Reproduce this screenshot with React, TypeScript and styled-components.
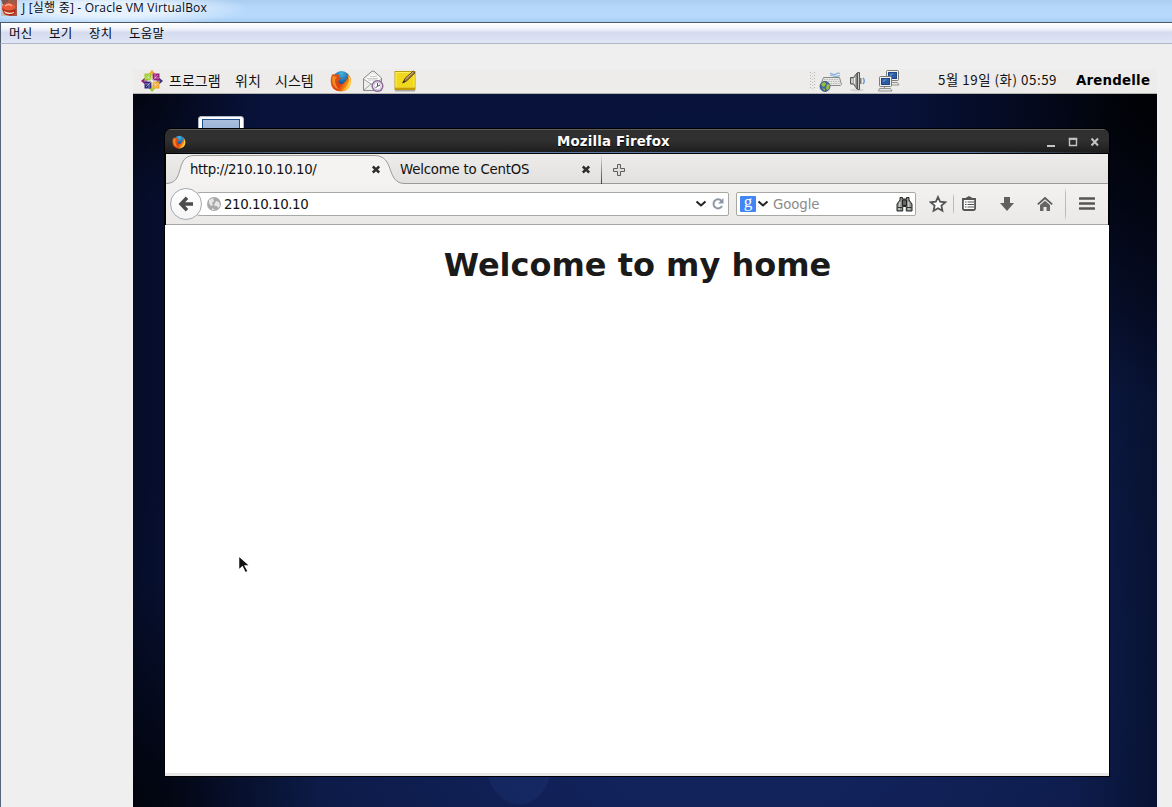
import React from 'react';
import styled, { createGlobalStyle } from 'styled-components';

const Global = createGlobalStyle`
  * { box-sizing: border-box; }
  html, body { margin: 0; padding: 0; overflow: hidden; background: #efefef; }
  svg { display: block; flex: none; }
`;

const Host = styled.div`
  width: 1172px;
  height: 807px;
  display: flex;
  flex-direction: column;
  overflow: hidden;
  background: #efefef;
  font-family: "Noto Sans CJK KR", sans-serif;
`;

const HostTitle = styled.header`
  height: 22px;
  flex: none;
  display: flex;
  align-items: flex-start;
  gap: 5px;
  padding-left: 1px;
  background: radial-gradient(ellipse 140px 18px at 110px 9px, rgba(235, 245, 255, 0.9) 40%, rgba(235, 245, 255, 0) 100%),
    linear-gradient(#abcdf0 0, #b5d7fa 30%, #b6d9fc 75%, #a9cdf0 100%);
`;

const Label = styled.span<{ $w: number; $size?: number; $ls?: number }>`
  width: ${(p) => p.$w}px;
  flex: none;
  white-space: pre;
  font-size: ${(p) => p.$size ?? 12}px;
  letter-spacing: ${(p) => p.$ls ?? 0}px;
`;

const PanelLabel = styled(Label)`
  line-height: 20px;
  padding-bottom: 2px;
`;

const HostCaption = styled(Label)`
  font-family: "Open Sans", "Noto Sans CJK KR", sans-serif;
  line-height: 16px;
  color: #0c0c14;
`;

const HostMenu = styled.nav`
  height: 22px;
  flex: none;
  display: flex;
  align-items: center;
  padding-left: 8px;
  border-top: 1px solid #4c5a6c;
  border-bottom: 1px solid #aeb6cc;
  border-left: 1px solid #4c5a6c;
  line-height: 18px;
  color: #08080c;
  background: linear-gradient(#ffffff 0, #f4f6fb 25%, #e4e8f5 40%, #d6dcef 45%, #dbe1f2 80%, #e2e7f6 100%);
`;

const HostBody = styled.main`
  flex: 1;
  min-height: 0;
  border-left: 1px solid #56657b;
  padding: 25px 15px 0 132px;
`;

const Guest = styled.div`
  height: 738px;
  display: flex;
  flex-direction: column;
`;

const Panel = styled.div`
  height: 25px;
  flex: none;
  display: flex;
  align-items: center;
  padding-left: 8px;
  background: #edecea;
  border-bottom: 1px solid #b3b5ae;
  color: #111;
`;

const Slot = styled.div<{ $w: number }>`
  width: ${(p) => p.$w}px;
  flex: none;
  display: flex;
  align-items: center;
`;

const UserName = styled.span`
  font: bold 13.33px/18px "DejaVu Sans", sans-serif;
  letter-spacing: 0.22px;
  color: #000;
  white-space: nowrap;
`;

const Desktop = styled.div`
  position: relative;
  flex: 1;
  overflow: hidden;
  background:
    radial-gradient(ellipse 33px 42px at 386px 669px, rgba(45, 75, 155, 0.16) 97%, transparent 100%),
    radial-gradient(ellipse 190px 230px at 0 100%, rgba(1, 3, 9, 0.9), transparent),
    radial-gradient(ellipse 260px 300px at 100% 0, #010206 8%, transparent),
    radial-gradient(ellipse 130px 110px at 0 0, rgba(2, 5, 15, 0.9), transparent),
    linear-gradient(90deg, rgba(2, 6, 18, 0.45) 0, transparent 90px, transparent 940px, rgba(2, 6, 18, 0.4) 1024px),
    radial-gradient(ellipse 620px 570px at 600px 580px, #12235c 25%, #0b1944 80%, #08123a 100%);
`;

const FolderIcon = styled.div`
  position: absolute;
  left: 65px;
  top: 22px;
  width: 46px;
  height: 40px;
  padding: 2px;
  border-radius: 3px;
  border: 1px solid #aeb4c0;
  background: #fff;
  &::before {
    content: '';
    display: block;
    height: 30px;
    margin: 0 1px;
    border: 1px solid #1f4c8f;
    background: linear-gradient(#a9bfdd, #7c9cc8);
  }
`;

const Window = styled.section`
  position: absolute;
  left: 31px;
  top: 34px;
  width: 946px;
  height: 649px;
  display: flex;
  flex-direction: column;
  border: 1px solid #000;
  border-radius: 7px 7px 0 0;
  overflow: hidden;
  background: #000;
`;

const TitleBar = styled.header`
  height: 25px;
  flex: none;
  display: grid;
  grid-template-columns: 50px 1fr 100px;
  align-items: center;
  border-top: 1px solid #5c5c58;
  border-bottom: 1px solid #000;
  background: linear-gradient(90deg, transparent, #5b7ba4 15%, #5b7ba4 85%, transparent) 0 100% / 100% 1px no-repeat,
    linear-gradient(#303030 0, #303030 45%, #1c1c1c 100%);
`;

const WindowName = styled.h1`
  margin: 0;
  padding-left: 3px;
  text-align: center;
  color: #fff;
  font: bold 13.33px/18px "DejaVu Sans", sans-serif;
  letter-spacing: 0.16px;
  text-shadow: 0 1px 1px #000;
`;

const WindowIcon = styled.div`
  padding-left: 7px;
`;

const WindowButtons = styled.div`
  display: flex;
  justify-content: flex-end;
  padding-right: 9px;
`;

const TabStrip = styled.div`
  height: 30px;
  flex: none;
  position: relative;
  display: flex;
  margin: 0 1px;
  font: 13.33px/29px "DejaVu Sans", sans-serif;
  color: #111;
  background: linear-gradient(#eeecea, #e2e1df);
  border-bottom: 1px solid #9b9b98;
`;

const TabShape = styled.svg`
  position: absolute;
  left: 0;
  top: 0;
`;

const Tab = styled.div<{ $w: number; $pad: number; $ls: number }>`
  position: relative;
  width: ${(p) => p.$w}px;
  flex: none;
  display: flex;
  align-items: center;
  justify-content: space-between;
  padding-left: ${(p) => p.$pad}px;
  padding-right: 10px;
  height: 30px;
  letter-spacing: ${(p) => p.$ls}px;
`;

const TabDivider = styled.div`
  width: 1px;
  height: 30px;
  background: linear-gradient(transparent, #3e3d38);
`;

const NewTab = styled.button`
  border: 0;
  padding: 3px 0 0 11px;
  background: none;
`;

const NavBar = styled.div`
  height: 41px;
  flex: none;
  display: flex;
  align-items: center;
  margin: 0 1px;
  padding-left: 4px;
  background: linear-gradient(#f3f2f1, #eae9e7);
  border-bottom: 1px solid #a6a6a2;
  font: 13.33px/22px "DejaVu Sans", sans-serif;
`;

const BackButton = styled.button`
  position: relative;
  z-index: 1;
  width: 32px;
  height: 32px;
  flex: none;
  display: grid;
  place-items: center;
  padding: 0;
  border: 1px solid #a2aab5;
  border-radius: 50%;
  background: linear-gradient(#fff, #f5f5f5);
`;

const Field = styled.div<{ $w: number }>`
  width: ${(p) => p.$w}px;
  height: 24px;
  flex: none;
  display: flex;
  align-items: center;
  border: 1px solid #a8a8a5;
  border-radius: 2px;
  background: #fff;
`;

const AddressField = styled(Field)`
  margin-left: -5px;
  padding-left: 9px;
`;

const SearchField = styled(Field)`
  margin-left: 7px;
  padding-left: 3px;
`;

const Address = styled.span`
  flex: 1;
  padding: 2px 0 0 3px;
  letter-spacing: -0.4px;
  color: #111;
`;

const Placeholder = styled.span`
  flex: 1;
  padding: 2px 0 0 3px;
  letter-spacing: -0.1px;
  color: #8b8b8b;
`;

const EngineBadge = styled.span`
  width: 16px;
  height: 16px;
  display: grid;
  place-items: center;
  border-radius: 1px;
  background: #4285f4;
  color: #fff;
  font: 17px/12px "Liberation Serif", serif;
  padding-bottom: 4px;
`;

const ToolDivider = styled.div<{ $h: number }>`
  width: 1px;
  height: ${(p) => p.$h}px;
  background: linear-gradient(transparent, #b4bac0 20%, #b4bac0 80%, transparent);
`;

const PageView = styled.article`
  flex: 1;
  background: #fff;
  border-bottom: 3px solid #e8e8e7;
`;

const Heading = styled.h1`
  margin: 0;
  padding: 21px 0 0 1px;
  text-align: center;
  color: #1a1a1a;
  font: bold 32px/38px "DejaVu Sans", sans-serif;
`;

const Pointer = styled.svg`
  position: absolute;
  left: 104px;
  top: 460px;
`;

const Firefox = ({ size }: { size: number }) => (
  <svg width={size} height={size} viewBox="0 0 22 22">
    <defs>
      <radialGradient id="ffGlobe" cx=".5" cy=".15" r=".8">
        <stop offset="0" stopColor="#41b5df" /><stop offset=".55" stopColor="#1d69ac" /><stop offset="1" stopColor="#102d68" />
      </radialGradient>
      <linearGradient id="ffFox" x1="0" y1=".2" x2="1" y2=".7">
        <stop offset="0" stopColor="#e25b15" /><stop offset=".55" stopColor="#dd3e0e" /><stop offset=".85" stopColor="#f9a11b" /><stop offset="1" stopColor="#ffe24e" />
      </linearGradient>
    </defs>
    <circle cx="11.5" cy="10" r="9" fill="url(#ffGlobe)" />
    <path d="M2 4.5 Q4.5 3.8 5.5 5 Q8 3.5 10 5 Q8.5 6 8.8 7.5 L11 8 Q10.5 9.5 8.6 10.4 Q8 13.4 11 14 Q14 14.2 14.5 12 Q17.3 11.2 16.2 7.8 Q18 9 18 11 Q18.8 6.5 16.5 3 Q21 6 21.2 11.5 Q20.5 21 11 21.5 Q1 21 .7 11.5 Q.5 7.5 2 4.5Z" fill="url(#ffFox)" />
    <path d="M18.5 5 Q22.5 11 18.5 16.5 Q16 19.5 12.5 20 Q18.5 17 18.9 11.5Z" fill="#ffd84a" />
    <path d="M2.6 6 Q1.6 11 3 14 Q5 18.5 9 19.5 Q4.7 15 5 9.5 L7 7Z" fill="#f28b20" />
  </svg>
);

const CentOS = () => (
  <svg width="22" height="22" viewBox="0 0 22 22">
    <path d="M11 0l3 3.5L11 7 8 3.500z" fill="#f0a62a" /><path d="M22 11l-3.500 3L15 11l3.500-3z" fill="#3c307f" />
    <path d="M11 22l3-3.500L11 15l-3 3.500z" fill="#9ccd2a" /><path d="M0 11l3.500-3L7 11l-3.500 3z" fill="#96207c" />
    <rect x="3.500" y="3.500" width="7" height="7" fill="#9ccd2a" /><rect x="11.500" y="3.500" width="7" height="7" fill="#96207c" />
    <rect x="3.500" y="11.500" width="7" height="7" fill="#302a7f" /><rect x="11.500" y="11.500" width="7" height="7" fill="#f0a62a" />
    <path d="M11 3v16M3 11h16M5 5l12 12M17 5L5 17M8 4v4H4M14 4v4h4M8 18v-4H4M14 18v-4h4" fill="none" stroke="#fff" strokeWidth=".7" strokeOpacity=".65" />
  </svg>
);

const Mail = () => (
  <svg width="22" height="22" viewBox="0 0 22 22">
    <path d="M1.500 8.500L10 1.200h2L19.500 8v12.500h-18z" fill="#eeeeec" stroke="#888a85" />
    <path d="M4 8l7-4 6.500 3v4L11 14 4 11z" fill="#fff" /><path d="M5 8.500h11M6 10h9M8 6.500h7" stroke="#c8cac5" />
    <path d="M2 9.500l7 4.500h4L19 9.500M2 20l7-6" fill="none" stroke="#a0a29d" />
    <circle cx="15.500" cy="16" r="5.300" fill="#fff" stroke="#8b6d9b" strokeWidth="1.500" />
    <circle cx="15.500" cy="16" r="3.700" fill="none" stroke="#c9bcd0" /><path d="M15.500 13v3.500l-2 1M16 16l2-1" fill="none" stroke="#555" />
  </svg>
);

const Note = () => (
  <svg width="22" height="22" viewBox="0 0 22 22">
    <path d="M1 20.500h20" stroke="#aaa" strokeWidth="2" />
    <rect x="1" y="1.500" width="20" height="18" fill="#f0d91c" stroke="#baa00a" /><rect x="2" y="2.500" width="18" height="15" fill="none" stroke="#fff15c" />
    <path d="M1 18.500h20" stroke="#c69a00" strokeWidth="2" />
    <path d="M9.500 12l1.500-3.500L19.200 1 21 2.800 12.500 11z" fill="#9d7547" stroke="#49351f" strokeWidth=".9" /><path d="M11.500 9.200l8-7.500" stroke="#e1bd89" /><path d="M8 13.500l1.500-3 2 1.500z" fill="#222" />
  </svg>
);

const Keyboard = () => (
  <svg width="24" height="22" viewBox="0 0 24 22">
    <path d="M11 3q4 2.500 6 1t4-.5M11 5q6 2.500 10 .5" fill="none" stroke="#8ab0dc" strokeWidth="1.300" />
    <path d="M4.500 7.500h16l2 7-1 1h-20l1-3z" fill="#e6e7e4" stroke="#888a85" />
    <path d="M5 9.500h16M4 11.500h17M4 13.500h17" stroke="#b9bbb6" strokeDasharray="1.500 1" />
    <circle cx="6" cy="16.500" r="5" fill="#3e68a3" stroke="#263d63" strokeWidth=".7" />
    <path d="M2 14l3-2 2 1-1 3-2 1zm5 4l1-4 3 1-1 4-2 1zM3 18l3 1v2z" fill="#9cbd41" />
  </svg>
);

const Volume = () => (
  <svg width="18" height="22" viewBox="0 0 18 22">
    <ellipse cx="8" cy="20" rx="7" ry="1.500" fill="#d5d5d2" />
    <path d="M1.500 7.500h3L8 3v16l-3.500-5h-3z" fill="#a8aaa6" stroke="#555753" />
    <path d="M8.500 2.500h2v17h-2z" fill="#c9cbc7" stroke="#555753" /><path d="M3 9v4M5.500 8v6" stroke="#eee" /><path d="M10.500 8h2v6h-2" fill="#777" />
    <path d="M14 8q2.500 3 0 6" fill="none" stroke="#6f9ed3" strokeWidth="1.500" />
  </svg>
);

const Network = () => (
  <svg width="22" height="22" viewBox="0 0 22 22">
    {[[8.500, 0.5], [1.500, 6.500]].map(([x, y]) => (
      <g key={x} transform={`translate(${x} ${y})`}>
        <path d="M5 10v2M-1 14.500l1-2.500h11l1.500 2.500z" fill="#e8e9e7" stroke="#92948f" />
        <rect width="12" height="10" rx="1" fill="#eeeeec" stroke="#7b7d78" /><rect x="2" y="2" width="8" height="6" fill="#2d5ca0" stroke="#1f4788" />
        <path d="M3 6l1-3h4z" fill="#5c8acb" />
      </g>
    ))}
  </svg>
);

const Grip = () => (
  <svg width="5" height="20" viewBox="0 0 5 20" shapeRendering="crispEdges">
    <path d="M.5 1v18M4.500 1v18" stroke="#b3b2ae" strokeDasharray="1 2" /><path d="M2.500 2v18" stroke="#c7c6c3" strokeDasharray="1 2" />
  </svg>
);

const CloseMark = () => (
  <svg width="10" height="10" viewBox="0 0 10 10"><path d="M1.800 2.500L8.200 8.500M8.200 2.500L1.800 8.500" stroke="#2f2f2f" strokeWidth="2.500" /></svg>
);

const Chevron = () => (
  <svg width="12" height="8" viewBox="0 0 12 8"><path d="M1.500 1.500L6 5.500l4.500-4" fill="none" stroke="#222" strokeWidth="2" /></svg>
);

const VBoxIcon = () => (
  <svg width="16" height="16" viewBox="0 0 16 16">
    <rect width="16" height="16" fill="#c9bdb7" /><path d="M0 0h16v16H8z" fill="#a05a48" />
    <path d="M1 7q1-4 4-3 3-3 6 0 4 0 3 4-5 4-13 2z" fill="#e8593a" /><path d="M1 8q6 5 14 1l-1 5q-6 3-11 0z" fill="#b32c12" />
    <path d="M4 6q4-3 7 0" fill="none" stroke="#ffb29a" strokeWidth="1.500" /><path d="M3 11q5 3 10 1v1q-5 2-9 0z" fill="#ffe8de" /><path d="M1 1h6M1 3h4" stroke="#555" />
  </svg>
);

const Binoculars = () => (
  <svg width="17" height="16" viewBox="0 0 17 16">
    <path d="M4 1.500h2.500V3h4V1.500H13V4l3 4v7h-5.700v-4.500H6.700V15H1V8l3-4z" fill="#8c918a" stroke="#252725" />
    <path d="M6.500 4h4v5.500h-4z" fill="#666" stroke="#222" /><path d="M4 6L3 14M12.500 6l.5 8" stroke="#c5cabf" strokeWidth="1.500" /><path d="M1.500 11.500h5M10.500 11.500h5" stroke="#333" />
  </svg>
);

const hostMenus = [
  { text: '머신', w: 40 }, { text: '보기', w: 40 }, { text: '장치', w: 40 }, { text: '도움말', w: 50 },
];

export default function App() {
  return (
    <Host>
      <Global />
      <HostTitle>
        <VBoxIcon />
        <HostCaption $w={200} $ls={0.2}>J [실행 중] - Oracle VM VirtualBox</HostCaption>
      </HostTitle>
      <HostMenu>{hostMenus.map((m) => <Label key={m.text} $w={m.w} $size={12.5} $ls={0.2}>{m.text}</Label>)}</HostMenu>
      <HostBody>
        <Guest>
          <Panel>
            <Slot $w={28}><CentOS /></Slot>
            <PanelLabel $w={66} $size={14}>프로그램</PanelLabel>
            <PanelLabel $w={40} $size={14}>위치</PanelLabel>
            <PanelLabel $w={55} $size={14}>시스템</PanelLabel>
            <Slot $w={32}><Firefox size={22} /></Slot>
            <Slot $w={32}><Mail /></Slot>
            <Slot $w={416}><Note /></Slot>
            <Slot $w={9}><Grip /></Slot>
            <Slot $w={30}><Keyboard /></Slot>
            <Slot $w={29}><Volume /></Slot>
            <Slot $w={60}><Network /></Slot>
            <PanelLabel $w={138} $size={13.33} $ls={0.55}>5월 19일 (화) 05:59</PanelLabel>
            <UserName>Arendelle</UserName>
          </Panel>
          <Desktop>
            <FolderIcon />
            <Window>
              <TitleBar>
                <WindowIcon><Firefox size={14} /></WindowIcon>
                <WindowName>Mozilla Firefox</WindowName>
                <WindowButtons>
                  <svg width="54" height="12" viewBox="0 0 54 12" fill="none" stroke="#c4c4c4" strokeWidth="2">
                    <path d="M1 10h8" />
                    <path d="M23.500 3h7v6.500h-7z" strokeWidth="1.400" /><path d="M22.800 2.700h8.400" />
                    <path d="M45.500 2.500l6.500 7M52 2.500l-6.500 7" />
                  </svg>
                </WindowButtons>
              </TitleBar>
              <TabStrip>
                <TabShape width="250" height="30" viewBox="0 0 250 30">
                  <path d="M0 29.500C20 29.500 8 1.500 28 1.500H208C230 1.500 219 29.500 239 29.500V30H0z" fill="#f4f3f2" />
                  <path d="M0 29.500C20 29.500 8 1.500 28 1.500H208C230 1.500 219 29.500 239 29.500" fill="none" stroke="#9b9b98" />
                </TabShape>
                <Tab $w={225} $pad={24} $ls={-0.4}><span>http://210.10.10.10/</span><CloseMark /></Tab>
                <Tab $w={210} $pad={9} $ls={-0.22}><span>Welcome to CentOS</span><CloseMark /></Tab>
                <TabDivider />
                <NewTab aria-label="New tab">
                  <svg width="12" height="12" viewBox="0 0 12 12"><path d="M4.500.5h3v4h4v3h-4v4h-3v-4h-4v-3h4z" fill="#dededc" stroke="#5d5d5b" /></svg>
                </NewTab>
              </TabStrip>
              <NavBar>
                <BackButton aria-label="Back">
                  <svg width="16" height="16" viewBox="0 0 16 16"><path d="M15 8H4M9 1.800L3 8l6 6.200" fill="none" stroke="#4c4c4c" strokeWidth="3.500" /></svg>
                </BackButton>
                <AddressField $w={532}>
                  <svg width="14" height="14" viewBox="0 0 14 14"><circle cx="7" cy="7" r="7" fill="#a9a9a9" /><path d="M2 3l4-2 1 3-2 2 1 2-2 1-2-3zm5 5l2-4 3 1 1 4-2 2-1-2H8zM5 11l3 2H5z" fill="#e6e6e6" /></svg>
                  <Address>210.10.10.10</Address>
                  <Slot $w={17}><Chevron /></Slot>
                  <Slot $w={16}>
                    <svg width="12" height="12" viewBox="0 0 12 12"><path d="M9.500 3A4.500 4.500 0 1 0 10 8" fill="none" stroke="#8c99a5" strokeWidth="2" /><path d="M11.500 0v5.500H6z" fill="#8c99a5" /></svg>
                  </Slot>
                </AddressField>
                <SearchField $w={180}>
                  <EngineBadge>g</EngineBadge>
                  <Slot $w={14}><svg width="1" height="8" /><Chevron /></Slot>
                  <Placeholder>Google</Placeholder>
                  <Slot $w={19}><Binoculars /></Slot>
                </SearchField>
                <Slot $w={13} />
                <Slot $w={24}>
                  <svg width="18" height="18" viewBox="0 0 18 18"><path d="M9 2l2.100 4.700 5.100.6-3.800 3.400 1 5.100L9 13.300l-4.400 2.500 1-5.100-3.800-3.400 5.100-.6z" fill="#fff" stroke="#555" strokeWidth="1.800" /></svg>
                </Slot>
                <ToolDivider $h={22} />
                <Slot $w={45}>
                  <svg width="32" height="16" viewBox="0 0 32 16">
                    <path d="M8 4V2h3.500l3.500-2 3.500 2H22v2" fill="#555" /><rect x="8.900" y="3" width="12.200" height="11" rx="1.500" fill="#fff" stroke="#555" strokeWidth="1.800" />
                    <path d="M11 6h1.500M11 8.500h1.500M11 11h1.500M13.500 6h6.500M13.500 8.500h6.500M13.500 11h6.500" stroke="#555" strokeWidth="1.200" />
                  </svg>
                </Slot>
                <Slot $w={38}>
                  <svg width="16" height="16" viewBox="0 0 16 16"><path d="M5 1h6v6h4l-7 8-7-8h4z" fill="#606060" /></svg>
                </Slot>
                <Slot $w={28}>
                  <svg width="16" height="16" viewBox="0 0 16 16"><path d="M.8 8.300L8 2l7.200 6.300" fill="none" stroke="#5a5a5a" strokeWidth="1.700" /><path d="M3 9l5-4.300L13 9v6H9.500v-4h-3v4H3z" fill="#666" /></svg>
                </Slot>
                <ToolDivider $h={34} />
                <Slot $w={13} />
                <svg width="16" height="14" viewBox="0 0 16 14"><path d="M1 1.500h14M1 6.500h14M1 11.500h14" stroke="#555" strokeWidth="2.600" strokeLinecap="round" /></svg>
              </NavBar>
              <PageView><Heading>Welcome to my home</Heading></PageView>
            </Window>
            <Pointer width="16" height="22" viewBox="0 0 16 22">
              <path d="M1.500 1.500v15l3.800-3.500 3 6 3-1.500-3-5.500h5z" fill="#111" stroke="#fff" strokeWidth="1.500" />
            </Pointer>
          </Desktop>
        </Guest>
      </HostBody>
    </Host>
  );
}
